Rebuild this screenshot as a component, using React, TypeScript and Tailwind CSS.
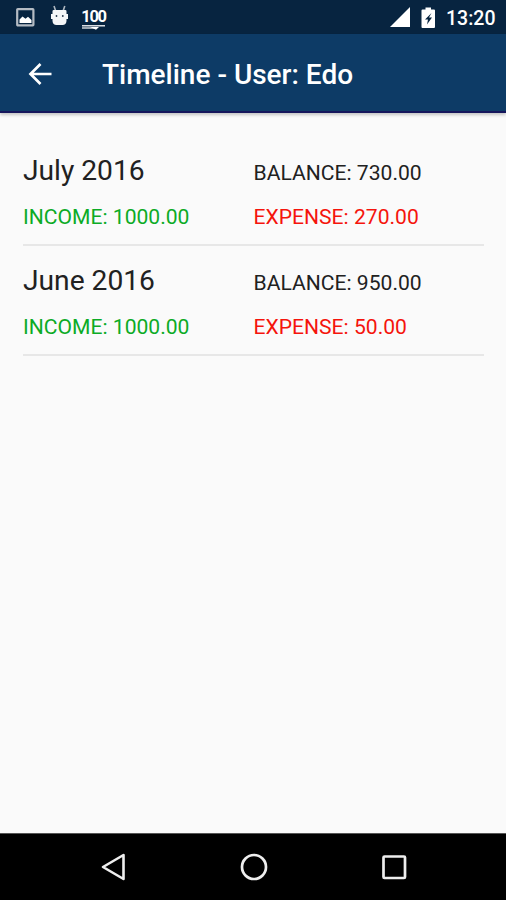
type Month = { name: string; balance: string; income: string; expense: string };

const months: Month[] = [
  { name: "July 2016", balance: "730.00", income: "1000.00", expense: "270.00" },
  { name: "June 2016", balance: "950.00", income: "1000.00", expense: "50.00" },
];

function StatusBar() {
  return (
    <div className="flex h-[34px] items-center bg-[#072440] text-white">
      <svg className="mt-px ml-4 h-[19px] w-[19px] shrink-0" viewBox="0 0 19 19">
        <rect x="1.2" y="1.2" width="16.200" height="16.200" rx="0.6" fill="none" stroke="#b4bbc3" strokeWidth="2.200" />
        <path d="M3.500 15v-3.500l3-3 3 2.300 2.500-2 3.500 3.200v3z" fill="#fff" />
      </svg>
      <svg className="ml-[15px] h-[22px] w-[20px] shrink-0 -translate-y-px" viewBox="0 0 20 22">
        <path d="M4 1l1.700 5M14.800 1l-1.700 5" stroke="#aeb7c0" strokeWidth="1.600" />
        <path d="M2.500 6.200q0-1.200 1.200-1.200h11.600q1.200 0 1.200 1.200v2.800h1.500v5h-1.500v2q-.3 4-4 4H6.500q-3.700 0-4-4v-2H1V9h1.500z" fill="#f4f6f8" />
        <circle cx="6.500" cy="11" r="0.900" fill="#26384c" />
        <circle cx="12.800" cy="11" r="0.900" fill="#26384c" />
      </svg>
      <div className="ml-[11px] flex w-[25px] flex-col items-center pt-[4px]">
        <span className="text-[16.5px] leading-[17px] font-bold tracking-[-1.3px]">100</span>
        <svg className="h-[5px] w-[25px]" viewBox="0 0 25 5">
          <path d="M1 .8h23" stroke="#fff" strokeWidth="1.300" />
          <path d="M1 3h13" stroke="#fff" strokeWidth="1.200" />
          <path d="M9 2h9l-3 2.800z" fill="#fff" />
        </svg>
      </div>
      <svg className="ml-auto h-[20px] w-[20px] shrink-0" viewBox="0 0 20 20">
        <path d="M20 0v20H0z" fill="#fff" />
      </svg>
      <svg className="mt-px ml-[11px] h-[22px] w-[15px] shrink-0" viewBox="0 0 15 22">
        <path d="M4.500 0.500h5.500v2H13q1 0 1 1v16.500q0 1-1 1H1.500q-1 0-1-1V3.500q0-1 1-1h3z" fill="#fff" />
        <path d="M10.500 6l-6.500 6.500h3l-1 5 5-7H8z" fill="#072440" />
      </svg>
      <span className="mr-[11px] ml-[10px] w-[49px] pt-[4px] text-[19.5px] leading-[32px] font-medium whitespace-nowrap">13:20</span>
    </div>
  );
}

function MonthRow({ month }: { month: Month }) {
  return (
    <div className="grid h-[110px] grid-cols-2 grid-rows-[54px_36px] border-b-2 border-[#e7e7e7] pt-2 text-[21.1px] whitespace-nowrap">
      <span className="pt-[2px] text-[28.2px] leading-[50px] text-[#212121]">{month.name}</span>
      <span className="pt-[2px] leading-[53px] text-[#212121]">BALANCE: {month.balance}</span>
      <span className="pt-px leading-[36px] text-[#0cab26]">INCOME: {month.income}</span>
      <span className="pt-px leading-[36px] text-[#f5140c]">EXPENSE: {month.expense}</span>
    </div>
  );
}

export default function App() {
  return (
    <div className="flex h-[900px] w-[506px] flex-col overflow-hidden bg-[#fafafa] font-[Roboto,sans-serif]">
      <StatusBar />
      <header className="flex h-[79px] items-center border-b-2 border-[#16165c] bg-[#0d3b66] text-white shadow-[0_2px_3px_rgba(0,0,0,0.22)]">
        <svg className="mt-[2px] ml-[28px] h-[24px] w-[24px]" viewBox="0 0 24 24">
          <path d="M23.500 12H2.500M12.500 2L2.500 12l10 10" fill="none" stroke="#fff" strokeWidth="2.700" />
        </svg>
        <h1 className="mt-[4px] ml-[50px] text-[28px] leading-[36px] font-medium whitespace-nowrap">Timeline - User: Edo</h1>
      </header>
      <main className="flex-1 pt-[23px] pr-[22px] pl-[23px]">
        {months.map((m) => (
          <MonthRow key={m.name} month={m} />
        ))}
      </main>
      <nav className="flex h-[67px] items-center border-t border-[#555] bg-black">
        <svg className="ml-[101px] h-[28px] w-[24px]" viewBox="0 0 24 28">
          <path d="M22.500 2v24L2 14z" fill="none" stroke="#eee" strokeWidth="2.600" strokeLinejoin="round" />
        </svg>
        <svg className="ml-[115px] h-[28px] w-[28px]" viewBox="0 0 28 28">
          <circle cx="14" cy="14" r="12" fill="none" stroke="#eee" strokeWidth="2.700" />
        </svg>
        <svg className="ml-[113px] h-[26px] w-[26px]" viewBox="0 0 26 26">
          <rect x="2.500" y="2.500" width="21.500" height="21.500" rx="1" fill="none" stroke="#eee" strokeWidth="2.700" />
        </svg>
      </nav>
    </div>
  );
}
